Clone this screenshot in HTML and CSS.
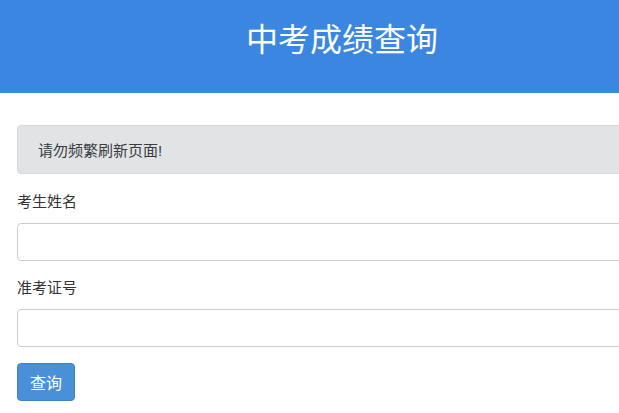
FILE: index.html
```html
<!DOCTYPE html>
<html lang="zh-CN">
<head>
    <meta charset="UTF-8">
    <meta name="viewport" content="width=device-width, initial-scale=1.0">
    <title>中考成绩查询</title>
    <link rel="stylesheet" href="styles.css">
</head>
<body>
    <div class="page">
        <div class="header">
            <h1>中考成绩查询</h1>
        </div>
        <div class="container">
            <div class="alert">请勿频繁刷新页面!</div>
            <form id="queryForm">
                <div class="form-group">
                    <label for="name">考生姓名</label>
                    <input type="text" id="name">
                </div>
                <div class="form-group last">
                    <label for="number">准考证号</label>
                    <input type="text" id="number">
                </div>
                <button type="button">查询</button>
            </form>
        </div>
    </div>
</body>
</html>
```

FILE: styles.css
```css
body {
    font-family: "Liberation Sans", "Noto Sans CJK SC", sans-serif;
    font-size: 14px;
    color: #333;
    margin: 0;
}
.page {
    width: 684px;
}
.header {
    background-color: #3a86e1;
    height: 93px;
    display: flex;
    justify-content: center;
}
.header h1 {
    margin: 0;
    padding-top: 18px;
    font-size: 32px;
    font-weight: normal;
    line-height: 44px;
    color: #fff;
}
.container {
    padding: 32px 17px 0 17px;
}
.alert {
    background-color: #e2e3e5;
    border: 1px solid #d6d8db;
    border-radius: 4px;
    height: 47px;
    padding: 0 20px;
    display: flex;
    align-items: center;
    font-size: 15px;
    color: #383d41;
    margin-bottom: 18px;
}
.form-group {
    margin-bottom: 17px;
}
.form-group.last {
    margin-bottom: 12px;
}
label {
    display: block;
    font-size: 15px;
    line-height: 20px;
    margin-bottom: 11px;
}
input {
    display: block;
    width: 100%;
    box-sizing: border-box;
    height: 38px;
    border: 1px solid #ccc;
    border-radius: 4px;
    padding: 6px 12px;
}
button {
    width: 58px;
    height: 38px;
    background-color: #4a90d9;
    border: 1px solid #3f80c8;
    border-radius: 4px;
    color: #fff;
    font-size: 16px;
    font-family: inherit;
    margin-top: 4px;
    cursor: pointer;
}
```
